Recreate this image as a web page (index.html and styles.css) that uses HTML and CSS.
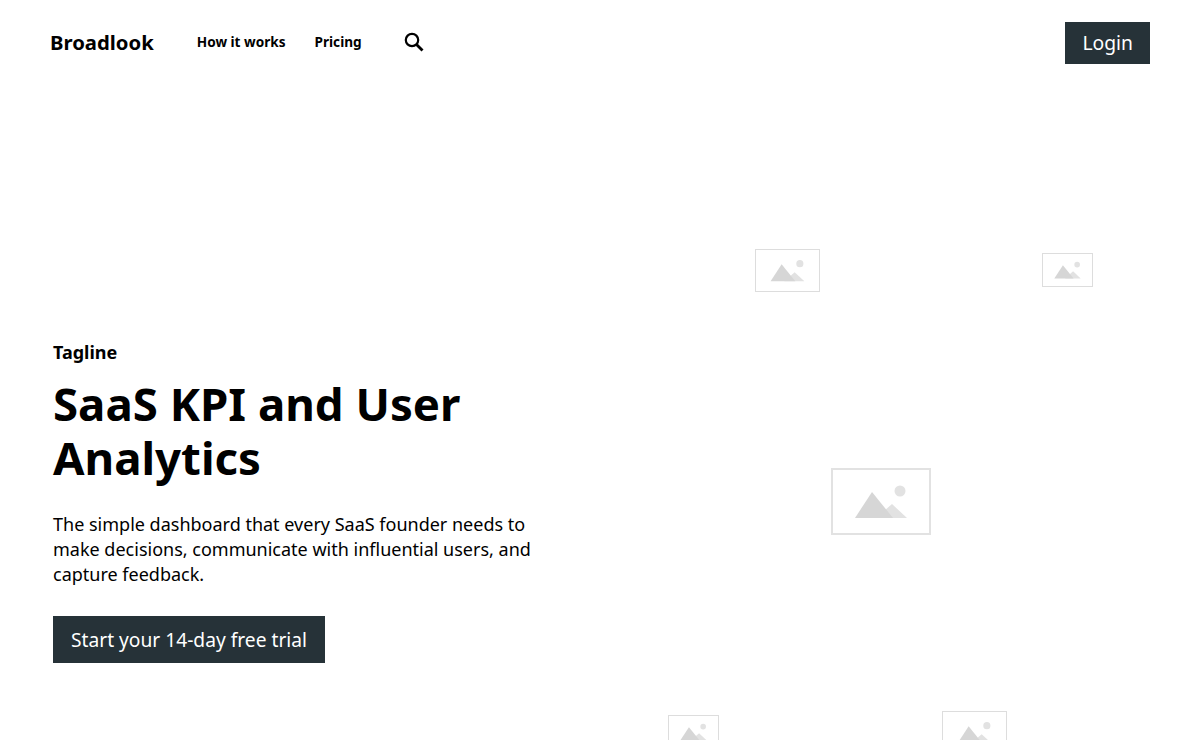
FILE: index.html
```html
<!DOCTYPE html>
<html lang="en">
<head>
    <meta charset="UTF-8">
    <title>Broadlook</title>
    <link rel="stylesheet" href="styles.css">
</head>
<body>
    <svg class="defs" width="0" height="0">
        <symbol id="ph-icon" viewBox="2 2 96 63">
            <circle cx="69" cy="23" r="5.5" fill="#e2e2e2"/>
            <path d="M45 50 L61 36 L76 50 Z" fill="#e2e2e2"/>
            <path d="M24 50 L41 24 L62 50 Z" fill="#d6d6d6"/>
        </symbol>
    </svg>

    <header class="nav">
        <div class="nav-left">
            <a class="logo" href="#">Broadlook</a>
            <a class="nav-link" href="#">How it works</a>
            <a class="nav-link" href="#">Pricing</a>
            <svg class="search" width="20" height="20" viewBox="0 0 20 20"><circle cx="8" cy="8" r="6.2" fill="none" stroke="#000" stroke-width="2.2"/><path d="M12.5 12.5 L18.5 18.5" stroke="#000" stroke-width="2.8"/></svg>
        </div>
        <a class="btn btn-login" href="#">Login</a>
    </header>

    <section class="hero">
        <div class="hero-text">
            <div class="tagline">Tagline</div>
            <h1>SaaS KPI and User Analytics</h1>
            <p>The simple dashboard that every SaaS founder needs to make decisions, communicate with influential users, and capture feedback.</p>
            <a class="btn btn-cta" href="#">Start your 14-day free trial</a>
        </div>
    </section>

    <div class="ph ph-a"><svg><use href="#ph-icon"/></svg></div>
    <div class="ph ph-b"><svg><use href="#ph-icon"/></svg></div>
    <div class="ph ph-c"><svg><use href="#ph-icon"/></svg></div>
    <div class="ph ph-d"><svg><use href="#ph-icon"/></svg></div>
    <div class="ph ph-e"><svg><use href="#ph-icon"/></svg></div>
</body>
</html>
```
FILE: styles.css
```css
html, body {
    margin: 0;
    padding: 0;
}
body {
    height: 740px;
    overflow: hidden;
    position: relative;
    background: #fff;
    color: #000;
    font-family: "Noto Sans", sans-serif;
}
a {
    color: inherit;
    text-decoration: none;
}
.defs {
    position: absolute;
}
.nav {
    display: flex;
    justify-content: space-between;
    align-items: center;
    padding: 22px 50px 0;
}
.nav-left {
    display: flex;
    align-items: center;
    padding-bottom: 2px;
}
.logo {
    font-size: 20.3px;
    line-height: 28px;
    font-weight: 700;
    margin-right: 43px;
}
.nav-link {
    font-size: 13.6px;
    line-height: 18px;
    font-weight: 700;
    margin-right: 29px;
}
.search {
    margin-left: 13px;
}
.btn {
    display: inline-block;
    background: #263238;
    color: #fff;
}
.btn-login {
    font-size: 19.3px;
    line-height: 26px;
    padding: 8px 17px;
}
.hero {
    padding: 276px 53px 0;
}
.hero-text {
    width: 490px;
}
.tagline {
    font-size: 18px;
    font-weight: 700;
}
h1 {
    font-size: 45.6px;
    line-height: 54px;
    margin: 12px 0 28px;
}
p {
    font-size: 18px;
    line-height: 25px;
    margin: 0 0 29px;
}
.btn-cta {
    font-size: 19.2px;
    line-height: 27px;
    padding: 10px 18px;
}
.ph {
    position: absolute;
    box-sizing: border-box;
    border: 1px solid #ddd;
}
.ph svg {
    display: block;
    width: 100%;
    height: 100%;
}
.ph-a {
    left: 755px;
    top: 249px;
    width: 65px;
    height: 43px;
}
.ph-b {
    left: 1042px;
    top: 253px;
    width: 51px;
    height: 34px;
}
.ph-c {
    left: 831px;
    top: 468px;
    width: 100px;
    height: 67px;
    border-width: 2px;
    border-color: #e2e2e2;
}
.ph-d {
    left: 668px;
    top: 715px;
    width: 51px;
    height: 34px;
}
.ph-e {
    left: 942px;
    top: 711px;
    width: 65px;
    height: 43px;
}
```
